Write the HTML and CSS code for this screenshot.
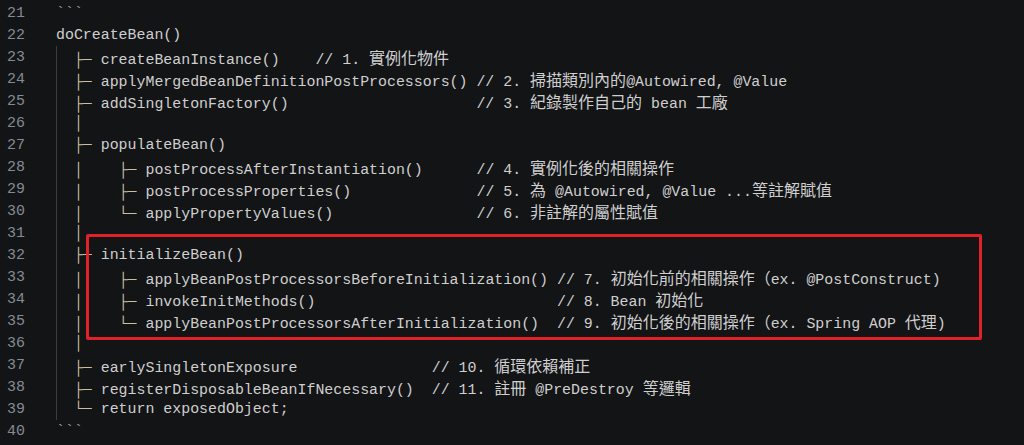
FILE: index.html
```html
<!DOCTYPE html>
<html lang="zh-Hant">
<head>
<meta charset="utf-8">
<title>doCreateBean</title>
<link rel="stylesheet" href="styles.css">
</head>
<body>
<div class="editor">
  <div class="gutter">
    <div class="ln">21</div><div class="ln">22</div><div class="ln">23</div><div class="ln">24</div><div class="ln">25</div>
    <div class="ln">26</div><div class="ln">27</div><div class="ln">28</div><div class="ln">29</div><div class="ln">30</div>
    <div class="ln">31</div><div class="ln">32</div><div class="ln">33</div><div class="ln">34</div><div class="ln">35</div>
    <div class="ln">36</div><div class="ln">37</div><div class="ln">38</div><div class="ln">39</div><div class="ln">40</div>
  </div>
  <div class="code">
    <div class="line fence">```</div>
    <div class="line">doCreateBean()</div>
    <div class="block">
      <div class="line">  <span class="t">├─</span> createBeanInstance()    // 1. <span class="z">實例化物件</span></div>
      <div class="line">  <span class="t">├─</span> applyMergedBeanDefinitionPostProcessors() // 2. <span class="z">掃描類別內的</span>@Autowired, @Value</div>
      <div class="line">  <span class="t">├─</span> addSingletonFactory()                     // 3. <span class="z">紀錄製作自己的</span> bean <span class="z">工廠</span></div>
      <div class="line">  <span class="t">│</span></div>
      <div class="line">  <span class="t">├─</span> populateBean()</div>
      <div class="line">  <span class="t">│</span>    <span class="t">├─</span> postProcessAfterInstantiation()      // 4. <span class="z">實例化後的相關操作</span></div>
      <div class="line">  <span class="t">│</span>    <span class="t">├─</span> postProcessProperties()              // 5. <span class="z">為</span> @Autowired, @Value ...<span class="z">等註解賦值</span></div>
      <div class="line">  <span class="t">│</span>    <span class="t">└─</span> applyPropertyValues()                // 6. <span class="z">非註解的屬性賦值</span></div>
      <div class="line">  <span class="t">│</span></div>
      <div class="line">  <span class="t">├─</span> initializeBean()</div>
      <div class="line">  <span class="t">│</span>    <span class="t">├─</span> applyBeanPostProcessorsBeforeInitialization() // 7. <span class="z">初始化前的相關操作（</span>ex. @PostConstruct)</div>
      <div class="line">  <span class="t">│</span>    <span class="t">├─</span> invokeInitMethods()                           // 8. Bean <span class="z">初始化</span></div>
      <div class="line">  <span class="t">│</span>    <span class="t">└─</span> applyBeanPostProcessorsAfterInitialization()  // 9. <span class="z">初始化後的相關操作（</span>ex. Spring AOP <span class="z">代理</span>)</div>
      <div class="line">  <span class="t">│</span></div>
      <div class="line">  <span class="t">├─</span> earlySingletonExposure               // 10. <span class="z">循環依賴補正</span></div>
      <div class="line">  <span class="t">├─</span> registerDisposableBeanIfNecessary()  // 11. <span class="z">註冊</span> @PreDestroy <span class="z">等邏輯</span></div>
      <div class="line">  <span class="t">└─</span> return exposedObject;</div>
    </div>
    <div class="line fence">```</div>
  </div>
  <div class="highlight"></div>
</div>
</body>
</html>
```

FILE: styles.css
```css
html, body {
  margin: 0;
  padding: 0;
  background: #131416;
}

.editor {
  position: relative;
  display: flex;
  gap: 31px;
  padding-top: 2px;
  width: 1024px;
  height: 445px;
  box-sizing: border-box;
  font-family: "Liberation Mono", "DejaVu Sans Mono", monospace;
  font-size: 14.92px;
  line-height: 22px;
  color: #cfcfcf;
  overflow: hidden;
}

.gutter {
  width: 25px;
  text-align: right;
  color: #858b93;
}

.code {
  flex: 1;
}

.line {
  white-space: pre;
  height: 22px;
}

.fence {
  color: #9a9a9a;
}

.block {
  box-shadow: inset 1px 0 0 #3b3d40;
}

.t {
  color: #c9bfa3;
}

.z {
  font-family: "Noto Sans CJK TC", "Noto Sans CJK SC", sans-serif;
  font-size: 16px;
  line-height: 22px;
}

.highlight {
  position: absolute;
  left: 86px;
  top: 234px;
  width: 890px;
  height: 100px;
  border: 3px solid #e2202a;
  border-radius: 2px;
}
```
